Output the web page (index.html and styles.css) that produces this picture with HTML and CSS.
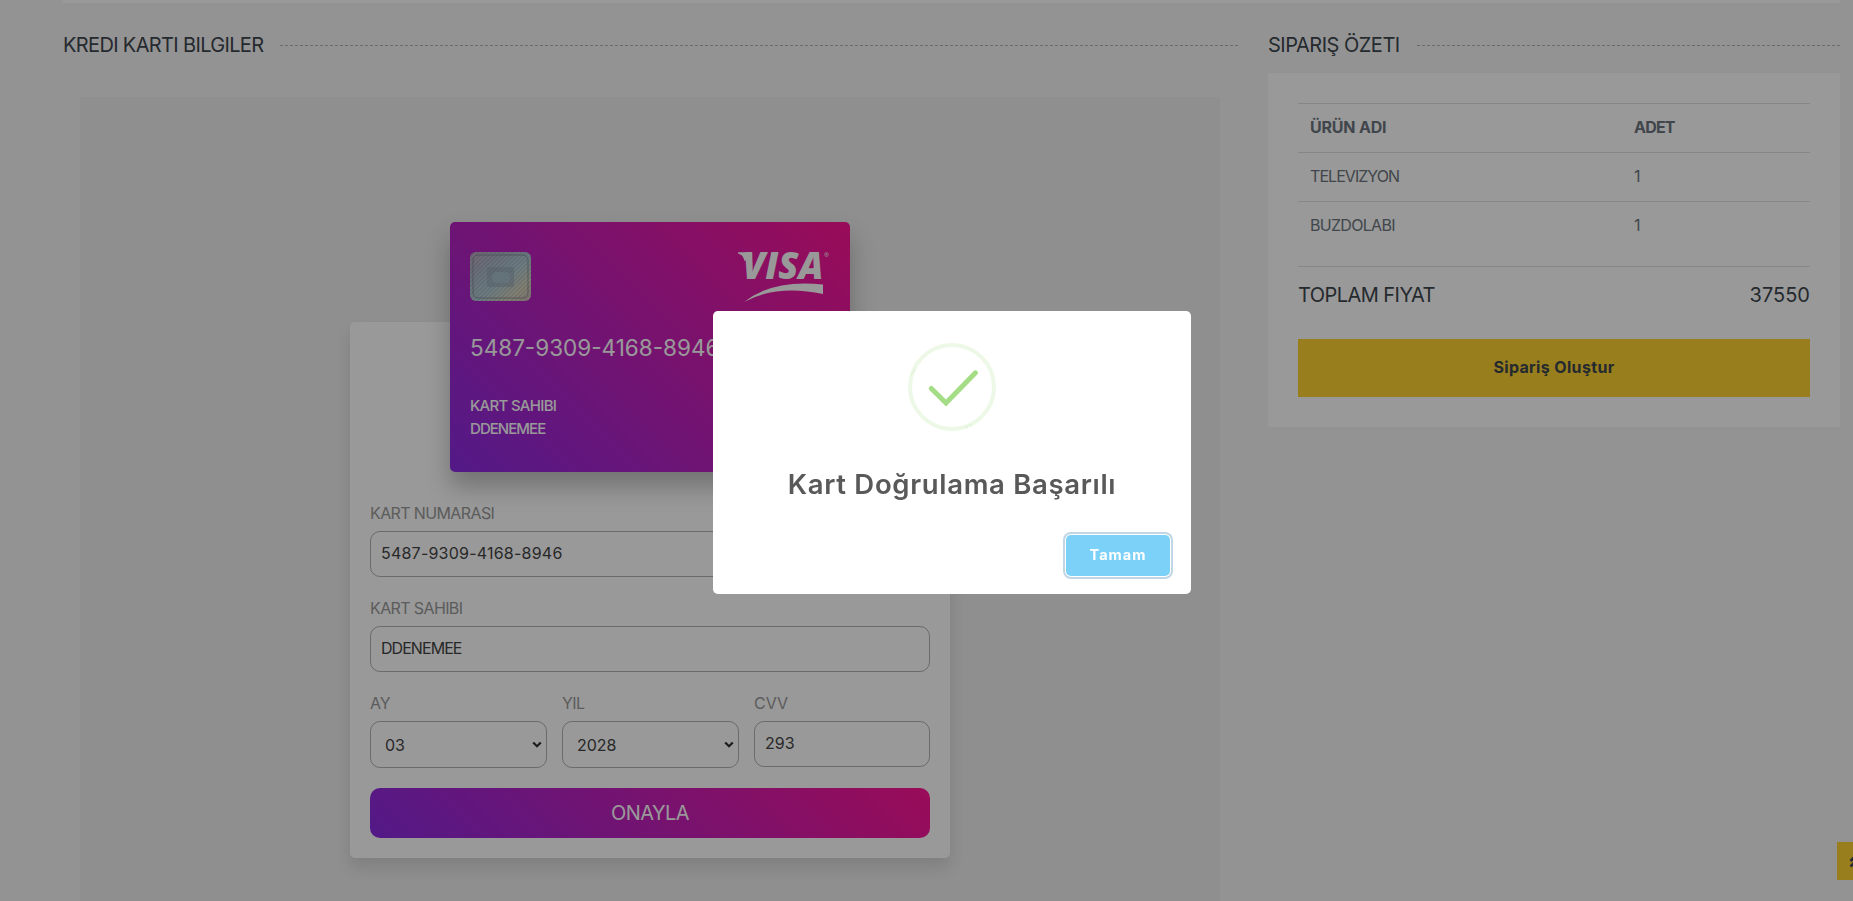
FILE: index.html
```html
<!DOCTYPE html>
<html lang="tr">
<head>
<meta charset="utf-8">
<title>Ödeme</title>
<link rel="stylesheet" href="styles.css">
</head>
<body>
<div class="top-strip"></div>
<main class="row">
  <section class="payment">
    <h5 class="section-title"><span class="t-payment">KREDI KARTI BILGILER</span></h5>
    <div class="panel">
      <div class="credit-card">
        <div class="card-top">
          <svg class="chip" width="61" height="49" viewBox="0 0 61 49">
            <defs>
              <linearGradient id="chipFill" x1="0" y1="0" x2="1" y2="1">
                <stop offset="0" stop-color="#c3a9c2"/>
                <stop offset=".25" stop-color="#b0b8ca"/>
                <stop offset=".55" stop-color="#b3cfd8"/>
                <stop offset=".8" stop-color="#d8d6bd"/>
                <stop offset="1" stop-color="#d9bfbb"/>
              </linearGradient>
              <pattern id="hatch" width="3" height="3" patternUnits="userSpaceOnUse" patternTransform="rotate(45)">
                <rect width="1" height="3" fill="#6f7784" opacity=".3"/>
              </pattern>
            </defs>
            <rect width="61" height="49" rx="6" fill="url(#chipFill)"/>
            <rect width="61" height="49" rx="6" fill="url(#hatch)"/>
            <rect x="3" y="3" width="55" height="43" rx="5" fill="none" stroke="#7d8490" stroke-width="1" opacity=".8"/>
            <rect x="17" y="15" width="27" height="20" rx="2" fill="#8d9dad" opacity=".5"/>
            <rect x="22" y="20" width="18" height="11" rx="4" fill="#a9c1cf" opacity=".75"/>
          </svg>
          <svg class="visa" width="96" height="52" viewBox="0 0 96 52">
            <text class="visa-word" x="7.500" y="28" textLength="81" lengthAdjust="spacingAndGlyphs">VISA</text>
            <path d="M3 1.200H15L16 6.500L9.500 10Q8 3.500 3 2.500Z" fill="#fff"/>
            <text class="visa-mark" x="89" y="6">®</text>
            <path d="M9.200 51Q38 28 88 33.500V43Q42 33 9.200 51Z" fill="#fff"/>
          </svg>
        </div>
        <div class="card-number">5487-9309-4168-8946</div>
        <div class="card-holder"><span class="ch-label">KART SAHIBI</span><span class="ch-name">DDENEMEE</span></div>
      </div>
      <form class="card-form">
        <div class="field">
          <label class="l-long">KART NUMARASI</label>
          <div class="control"><span class="v-number">5487-9309-4168-8946</span></div>
        </div>
        <div class="field">
          <label class="l-long">KART SAHIBI</label>
          <div class="control"><span class="v-name">DDENEMEE</span></div>
        </div>
        <div class="field-row">
          <div class="field">
            <label>AY</label>
            <div class="control select"><span>03</span>
              <svg class="caret" width="10" height="8" viewBox="0 0 10 8"><path d="M1.200 1.500L5 5.300L8.800 1.500" fill="none" stroke="#333" stroke-width="2.200"/></svg></div>
          </div>
          <div class="field">
            <label class="l-long">YIL</label>
            <div class="control select"><span>2028</span>
              <svg class="caret" width="10" height="8" viewBox="0 0 10 8"><path d="M1.200 1.500L5 5.300L8.800 1.500" fill="none" stroke="#333" stroke-width="2.200"/></svg></div>
          </div>
          <div class="field">
            <label>CVV</label>
            <div class="control"><span>293</span></div>
          </div>
        </div>
        <div class="submit"><span>ONAYLA</span></div>
      </form>
    </div>
  </section>
  <aside class="summary">
    <h5 class="section-title"><span class="t-summary">SIPARIŞ ÖZETI</span></h5>
    <div class="summary-box">
      <div class="line head"><span class="s-product">ÜRÜN ADI</span><span class="s-count">ADET</span></div>
      <div class="line"><span class="s-tv">TELEVIZYON</span><span>1</span></div>
      <div class="line last"><span class="s-fridge">BUZDOLABI</span><span>1</span></div>
      <div class="total"><span class="s-total">TOPLAM FIYAT</span><span>37550</span></div>
      <div class="order"><span>Sipariş Oluştur</span></div>
    </div>
  </aside>
</main>
<div class="back-top">
  <svg width="14" height="14" viewBox="0 0 14 14"><path d="M1.500 7L7 1.500L12.500 7M1.500 12.500L7 7L12.500 12.500" fill="none" stroke="#3d464d" stroke-width="2.600"/></svg>
</div>
<div class="overlay">
  <div class="modal">
    <svg class="modal-icon" width="88" height="88" viewBox="0 0 88 88">
      <circle cx="44" cy="44" r="42" fill="none" stroke="#a5dc86" stroke-opacity=".2" stroke-width="4"/>
      <path d="M23.300 45.500L38 60L67.500 29.800" fill="none" stroke="#a5dc86" stroke-width="5" stroke-linecap="round"/>
      <path d="M3 32L6 28M6 28L7 26M57 83L60 85M61 81L64 83" stroke="#a5dc86" stroke-opacity=".35" stroke-width=".7"/>
    </svg>
    <div class="modal-title">Kart Doğrulama Başarılı</div>
    <div class="modal-footer"><div class="modal-button"><span>Tamam</span></div></div>
  </div>
</div>
</body>
</html>
```
FILE: styles.css
```css
* { box-sizing: border-box; }
html, body { height: 100%; }
body {
  margin: 0;
  overflow: hidden;
  background: #f5f5f5;
  color: #6c757d;
  font: 370 16px/24px Inter, "Noto Sans", sans-serif;
}
span, label { white-space: nowrap; }
.top-strip { height: 3px; margin: 0 13px 0 63px; background: #fff; }
.row { display: flex; gap: 30px; height: 898px; overflow: hidden; padding: 30px 13px 0 63px; }
.payment { width: 1175px; }
.summary { width: 572px; }
.section-title {
  display: flex;
  align-items: center;
  gap: 17px;
  height: 24px;
  margin: 0 0 16px;
  color: #3d464d;
  font-size: 20px;
  font-weight: 420;
}
.section-title::after { content: ""; flex: 1; border-top: 1px dashed #adb5bd; }
.t-payment { letter-spacing: -.65px; }
.t-summary { letter-spacing: -.5px; }

.panel {
  display: flex;
  flex-direction: column;
  align-items: center;
  height: 804px;
  margin: 40px 18px 0 17px;
  padding-top: 125px;
  background: #eee;
}
.credit-card {
  position: relative;
  z-index: 1;
  flex: none;
  width: 400px;
  height: 250px;
  margin-bottom: -150px;
  padding: 29px 20px 0;
  border-radius: 5px;
  background: linear-gradient(45deg, blueviolet, deeppink);
  box-shadow: 0 15px 25px rgba(0, 0, 0, .25);
  color: #fff;
}
.card-top { display: flex; justify-content: space-between; height: 52px; }
.chip { margin-top: 1px; }
.visa { margin-right: -1px; overflow: visible; }
.visa-word { font: italic 800 37px "Open Sans", sans-serif; fill: #fff; }
.visa-mark { font: 6px "Open Sans", sans-serif; fill: #fff; }
.card-number { margin-top: 30px; font-size: 22.500px; font-weight: 420; line-height: 30px; }
.card-holder { display: flex; flex-direction: column; margin-top: 31px; font-size: 15px; line-height: 23px; font-weight: 500; }
.ch-label { letter-spacing: -.7px; }
.ch-name { letter-spacing: -.95px; }
.card-form {
  flex: none;
  width: 600px;
  height: 536px;
  padding: 177px 20px 20px;
  border-radius: 5px;
  background: #fff;
  box-shadow: 0 10px 15px rgba(0, 0, 0, .1);
}
.field { display: flex; flex-direction: column; gap: 5px; height: 95px; }
.field label { height: 27px; line-height: 29px; color: #999; font-weight: 400; }
.field .l-long { letter-spacing: -.62px; }
.field-row { display: grid; grid-template-columns: 177px 177px 176px; gap: 15px; height: 99px; }
.control {
  display: flex;
  align-items: center;
  height: 46px;
  padding: 0 10px 2px;
  border: 1px solid rgba(0, 0, 0, .3);
  border-radius: 10px;
  color: #444;
  font-weight: 400;
}
.v-number { letter-spacing: .22px; }
.v-name { letter-spacing: -.95px; }
.select { justify-content: space-between; height: 47px; padding: 0 4px 0 14px; }
.submit {
  display: flex;
  align-items: center;
  justify-content: center;
  height: 50px;
  border-radius: 10px;
  background: linear-gradient(45deg, blueviolet, deeppink);
  color: #fff;
  font-size: 20px;
  font-weight: 400;
  letter-spacing: -.6px;
}

.summary-box { height: 354px; padding: 30px; background: #fff; }
.line {
  display: grid;
  grid-template-columns: 324px 1fr;
  align-items: center;
  height: 49px;
  padding: 0 12px 2px;
  border-top: 1px solid #dee2e6;
}
.head { font-weight: 700; }
.s-product { letter-spacing: -.2px; }
.s-count { letter-spacing: -.8px; }
.s-tv { letter-spacing: -.95px; }
.s-fridge { letter-spacing: -.7px; }
.s-total { letter-spacing: -.55px; }
.last { margin-bottom: 16px; }
.total {
  display: flex;
  justify-content: space-between;
  height: 73px;
  padding-top: 16px;
  border-top: 1px solid #dee2e6;
  color: #3d464d;
  font-size: 20px;
  font-weight: 420;
}
.order {
  display: flex;
  align-items: center;
  justify-content: center;
  height: 58px;
  padding-bottom: 2px;
  background: #ffd333;
  color: #3d464d;
  font-weight: 700;
  letter-spacing: .35px;
}
.back-top {
  position: fixed;
  top: 842px;
  right: -22px;
  display: flex;
  align-items: center;
  justify-content: center;
  width: 38px;
  height: 38px;
  background: #ffd333;
}
.overlay {
  position: fixed;
  inset: 0;
  z-index: 10;
  display: flex;
  align-items: center;
  justify-content: center;
  padding: 4px 0 0 51px;
  background: rgba(0, 0, 0, .4);
}
.modal {
  display: flex;
  flex-direction: column;
  align-items: center;
  width: 478px;
  height: 283px;
  padding-top: 32px;
  border-radius: 5px;
  background: #fff;
}
.modal-title { margin-top: 35px; color: #595959; font-size: 27.500px; font-weight: 600; line-height: 36px; letter-spacing: .68px; white-space: nowrap; }
.modal-footer { display: flex; justify-content: flex-end; width: 100%; padding: 33px 21px 0; }
.modal-button {
  display: flex;
  align-items: center;
  justify-content: center;
  width: 104px;
  height: 41px;
  padding-bottom: 2px;
  border-radius: 5px;
  background: #7cd1f9;
  box-shadow: 0 0 0 1px #fff, 0 0 0 3px rgba(43, 114, 165, .29);
  color: #fff;
  font-size: 14.500px;
  font-weight: 700;
  letter-spacing: 1px;
}
```
